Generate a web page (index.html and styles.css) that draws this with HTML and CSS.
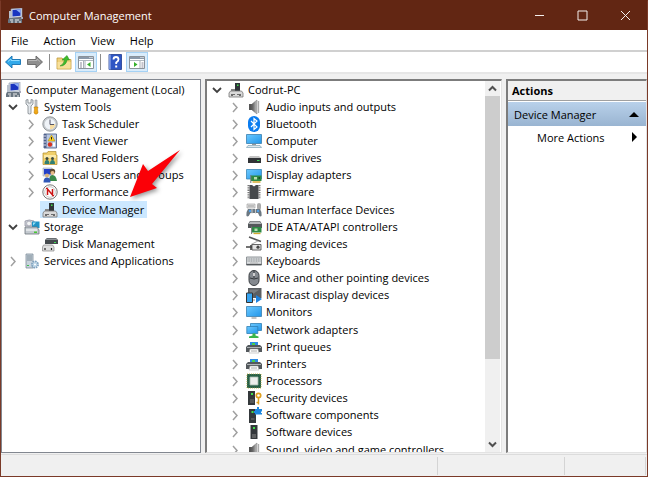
FILE: index.html
```html
<!DOCTYPE html>
<html lang="en">
<head>
    <meta charset="UTF-8">
    <meta name="viewport" content="width=device-width, initial-scale=1.0">
    <title>Computer Management</title>
    <link rel="stylesheet" href="styles.css">
</head>
<body>
    <!-- icon sprite -->
    <svg class="sprite" aria-hidden="true">
        <linearGradient id="screen" x1="0" y1="0" x2="1" y2="1">
            <stop offset="0" stop-color="#6cc9ff"/>
            <stop offset="1" stop-color="#2196ea"/>
        </linearGradient>
        <linearGradient id="metal" x1="0" y1="0" x2="1" y2="0">
            <stop offset="0" stop-color="#555"/>
            <stop offset="1" stop-color="#c8c8c8"/>
        </linearGradient>
        <symbol id="i-mgmt" viewBox="0 0 16 16">
            <path d="M3 1 14 0v9L3 10z" fill="#d4dce8" stroke="#8a94a8" stroke-width=".6"/>
            <path d="M4.500 2 12.500 1.300v6.500L4.500 8.500z" fill="#1a35c0"/>
            <path d="M8 1.700 12.500 1.300v4z" fill="#8fb0f5"/>
            <path d="M1 3h3v7H1z" fill="#b8c0cc"/>
            <path d="M13 9h2v2h-2z" fill="#aab"/>
            <path d="M1 10h12l1 2v3H0v-3z" fill="#687480"/>
            <path d="M2 11.500h3v1H2zM7 11.500h4v1H7zM3 13.500h2v1H3zM7 13.500h2v1H7zM11 13.500h2v1h-2z" fill="#eee"/>
        </symbol>
        <symbol id="i-tools" viewBox="0 0 16 16">
            <path d="M2 1v4l2 2v7.500q1.500 1 3 0V7l2-2V1L7 .500V4H4V.500z" fill="#e4e8ec" stroke="#7d858c" stroke-width=".8"/>
            <path d="M11 1h2v7h-2z" fill="#c8ccd0" stroke="#888" stroke-width=".5"/>
            <path d="M10 8h4l-.500 2 .500 4q-2 2.500-4 0l.500-4z" fill="#f0a818" stroke="#b87800" stroke-width=".5"/>
        </symbol>
        <symbol id="i-clock" viewBox="0 0 16 16">
            <circle cx="8" cy="8" r="7.200" fill="#c9cdd1" stroke="#7e8489" stroke-width=".8"/>
            <circle cx="8" cy="8" r="5.300" fill="#eff3f8"/>
            <path d="M8 8h5.300A5.300 5.300 0 0 1 8 13.300z" fill="#f7dca0"/>
            <path d="M8 3.500V8.500H12" fill="none" stroke="#556" stroke-width="1"/>
        </symbol>
        <symbol id="i-event" viewBox="0 0 16 16">
            <path d="M2 1h12.500v14H2z" fill="#b9c8e2" stroke="#55698e" stroke-width=".9"/>
            <path d="M2 1h2.500v14H2z" fill="#4e618a"/>
            <path d="M1 3h3M1 6h3M1 9h3M1 12h3" stroke="#dde" stroke-width="1"/>
            <path d="M9.500 2 13 8H6z" fill="#ffd426" stroke="#a98600" stroke-width=".5"/>
            <path d="M9.500 4v2.500" stroke="#222" stroke-width="1"/>
            <circle cx="8" cy="11.500" r="2.200" fill="#d7321e"/>
            <path d="M11 9.500h2v4h-2z" fill="#fff"/>
        </symbol>
        <symbol id="i-share" viewBox="0 0 16 16">
            <path d="M1 3h4l1-1.500h8V5h1v9.500H1z" fill="#f0cf6a" stroke="#b08d2e" stroke-width=".7"/>
            <path d="M2 5h12v3H2z" fill="#fbe9a8"/>
            <circle cx="5" cy="8.500" r="1.500" fill="#3c4a40"/>
            <circle cx="10.500" cy="8.500" r="1.500" fill="#3c4a40"/>
            <path d="M2.500 14q0-4 2.500-4t2.500 4zM8 14q0-4 2.500-4t2.500 4z" fill="#2f7f74"/>
        </symbol>
        <symbol id="i-users" viewBox="0 0 16 16">
            <path d="M1 1h9v8H1z" fill="#d5dbe6" stroke="#8a90a0" stroke-width=".5"/>
            <path d="M2 2h7v5.500H2z" fill="#2440c8"/>
            <circle cx="10.500" cy="4.500" r="2.700" fill="#5f4a30"/>
            <circle cx="10.500" cy="6" r="2" fill="#e8bb8a"/>
            <path d="M7 14q0-6 3.500-6t4.500 6z" fill="#3a8a4a"/>
            <circle cx="5" cy="8.500" r="2" fill="#d9b27c"/>
            <path d="M1.500 15.500q0-5 3.500-5t3.500 5z" fill="#3158b8"/>
        </symbol>
        <symbol id="i-perf" viewBox="0 0 16 16">
            <circle cx="8" cy="8" r="7.200" fill="#fff" stroke="#777" stroke-width="1"/>
            <circle cx="8" cy="8" r="5.300" fill="none" stroke="#bbb" stroke-width=".8"/>
            <path d="M5.500 11V5l5 6V5" fill="none" stroke="#cc1414" stroke-width="1.500"/>
            <path d="M4 4l8 8" stroke="#cc1414" stroke-width="1"/>
        </symbol>
        <symbol id="i-device" viewBox="0 0 16 16">
            <path d="M7 1h5v9H7z" fill="#30353a"/>
            <path d="M9 2.500h1.500V4H9z" fill="#3ee04a"/>
            <path d="M3 7h4v2H3z" fill="#888"/>
            <path d="M2.500 9h11L15 11v4H1v-4z" fill="#d9d9d9" stroke="#777" stroke-width=".8"/>
            <path d="M4 12v2M6 12v1M12 12v2M10 12v1" stroke="#222" stroke-width="1.200"/>
        </symbol>
        <symbol id="i-storage" viewBox="0 0 16 16">
            <path d="M1 2q4-2 9 0v5H1z" fill="#d2d6da" stroke="#889" stroke-width=".7"/>
            <path d="M8 2.500h7.500V9H8z" fill="#1f93c6"/>
            <path d="M9 3.500h3l-3 3z" fill="#9be0f5"/>
            <circle cx="5" cy="4.500" r="2.400" fill="#f2f4f5" stroke="#99a" stroke-width=".7"/>
            <path d="M1 8h12l2 3v4H1z" fill="#c4cad0" stroke="#6c747c" stroke-width=".8"/>
            <path d="M2 11h11" stroke="#fff" stroke-width="1"/>
            <path d="M10 12.500h3V14h-3z" fill="#48c832"/>
        </symbol>
        <symbol id="i-diskmgmt" viewBox="0 0 16 16">
            <path d="M3 4l2-2h9l2 2v4H3z" fill="#454a4e"/>
            <path d="M3.500 4 5 2.500h9L15.500 4z" fill="#8d9296"/>
            <path d="M12 6h2v1h-2z" fill="#45e05a"/>
            <path d="M1.500 9h9L12 11v4H.500v-4z" fill="#dedede" stroke="#888" stroke-width=".7"/>
            <path d="M3 12v2M9.500 12v2" stroke="#222" stroke-width="1.200"/>
        </symbol>
        <symbol id="i-services" viewBox="0 0 16 16">
            <path d="M2 1h7v14H2z" fill="#c8d3dc" stroke="#7f8d99" stroke-width=".8"/>
            <path d="M3 3h5M3 5h5M3 7h5" stroke="#73818d" stroke-width=".9"/>
            <path d="M3 12h2v1H3z" fill="#3bc04c"/>
            <circle cx="11" cy="11.500" r="3" fill="#eaf2f8" stroke="#7ea2bf" stroke-width="2" stroke-dasharray="1.600 .7"/>
            <circle cx="11" cy="11.500" r="2.300" fill="#b4cfe2"/>
            <circle cx="11" cy="11.500" r="1" fill="#fff"/>
        </symbol>
        <symbol id="i-audio" viewBox="0 0 16 16">
            <path d="M3 5h3v6H3z" fill="#555"/>
            <path d="M6 5 11 1v14L6 11z" fill="url(#metal)" stroke="#777" stroke-width=".5"/>
            <path d="M12.500 2v12" stroke="#aaa" stroke-width="1.300"/>
        </symbol>
        <symbol id="i-bluetooth" viewBox="0 0 16 16">
            <rect x="2" width="12" height="16" rx="6" fill="#0a7cf0"/>
            <path d="M5 5l6 6-3 2.500v-11L11 5l-6 6" fill="none" stroke="#fff" stroke-width="1.200"/>
        </symbol>
        <symbol id="i-computer" viewBox="0 0 16 16">
            <path d="M.500 1.500h15v9H.500z" fill="url(#screen)" stroke="#3a7fae" stroke-width=".8"/>
            <path d="M6 11h4v1H6z" fill="#999"/>
            <path d="M2 12.500h12l1.500 2H.500z" fill="#dfe7ec" stroke="#7fa5b8" stroke-width=".7"/>
        </symbol>
        <symbol id="i-disk" viewBox="0 0 16 16">
            <path d="M2 8l2-2h9l2 2z" fill="#c4c4c4"/>
            <path d="M2 8h13v5H2z" fill="#303336"/>
            <path d="M11 10h2.500v1H11z" fill="#3de05a"/>
        </symbol>
        <symbol id="i-display" viewBox="0 0 16 16">
            <path d="M.500 2.500h15v9.500H.500z" fill="url(#screen)" stroke="#3b86b5" stroke-width=".8"/>
            <path d="M5 8.500h10.500V14H5z" fill="#2d8a44"/>
            <path d="M8 10h3v2.500H8z" fill="#b8dcae"/>
            <path d="M12.500 10h1.500v2h-1.500z" fill="#1b5129"/>
            <path d="M6.500 15h8" stroke="#d5aa32" stroke-width="1.500"/>
            <path d="M4.800 8v8" stroke="#777"/>
        </symbol>
        <symbol id="i-firmware" viewBox="0 0 16 16">
            <path d="M2.500 1v14M13.500 1v14" stroke="#777" stroke-width="2" stroke-dasharray="1.300 1"/>
            <path d="M3.500 1H6l2 1.500L10 1h2.500v14h-9z" fill="#46494c"/>
        </symbol>
        <symbol id="i-hid" viewBox="0 0 16 16">
            <path d="M1 2h8v4H1z" fill="#e3e3e3" stroke="#999" stroke-width=".6"/>
            <path d="M2 4h6" stroke="#999" stroke-width="1"/>
            <rect x="11" y="1" width="4" height="7" rx="2" fill="#aaa"/>
            <path d="M2 7h12q2 3 1.500 7-2 1.500-3.500-3H4.500q-2 4.500-4 3Q0 10 2 7z" fill="#6c7882"/>
            <circle cx="4" cy="9" r="1.200" fill="#4ea0ea"/>
            <circle cx="12" cy="9" r="1.200" fill="#4ea0ea"/>
            <path d="M6 7v5M9.500 7v5" stroke="#ddd" stroke-width=".8"/>
        </symbol>
        <symbol id="i-ide" viewBox="0 0 16 16">
            <path d="M2 5l2-3h10l2 3v4H2z" fill="#54585b"/>
            <path d="M2.500 5 4.300 2.500h9.400L15.500 5z" fill="#b5b8ba"/>
            <path d="M6 8h9.500v5.500H6z" fill="#2d8a44"/>
            <path d="M8.500 9.500h3V12h-3z" fill="#b8dcae"/>
            <path d="M7.500 14.500h7" stroke="#d5aa32" stroke-width="1.300"/>
            <path d="M5.600 7.500V15" stroke="#777"/>
        </symbol>
        <symbol id="i-imaging" viewBox="0 0 16 16">
            <path d="M3 1 15 5.500" stroke="#555" stroke-width="1.500"/>
            <path d="M12 5 5 8.500" stroke="#aaa" stroke-width="1"/>
            <path d="M6 8.500h9V14H6z" fill="#e2e2e2" stroke="#555" stroke-width=".9"/>
            <circle cx="12" cy="11.200" r="1.600" fill="#444"/>
            <path d="M0 11h6M5 9v5" stroke="#444" stroke-width="1.600"/>
        </symbol>
        <symbol id="i-keyboard" viewBox="0 0 16 16">
            <path d="M.500 4h15v8H.500z" fill="#dcdfe1" stroke="#858a8e" stroke-width=".9"/>
            <path d="M1.500 6h13M1.500 8h13" stroke="#858a8e" stroke-width="1" stroke-dasharray="1.200 .5"/>
            <path d="M.500 11.500h15" stroke="#55595c" stroke-width="1.300"/>
            <path d="M4 10h8" stroke="#aaa" stroke-width=".8"/>
        </symbol>
        <symbol id="i-mouse" viewBox="0 0 16 16">
            <rect x="3" y=".5" width="10" height="15" rx="5" fill="#84898f" stroke="#383c40"/>
            <path d="M8 1v7M4 8q4 2 8 0" fill="none" stroke="#33373b"/>
            <path d="M8 3v3" stroke="#ddd" stroke-width="1.800"/>
        </symbol>
        <symbol id="i-miracast" viewBox="0 0 16 16">
            <path d="M2 1h13.500v10H2z" fill="#5b5f63"/>
            <path d="M3.500 2.500h10L4 9z" fill="#7a7e82"/>
            <path d="M.500 6h6v9.500h-6z" fill="#36a4f2" stroke="#333" stroke-width="1"/>
            <path d="M10 8l6 4-6 4z" fill="#1e83e0"/>
            <path d="M7 13h2" stroke="#888"/>
        </symbol>
        <symbol id="i-monitor" viewBox="0 0 16 16">
            <path d="M.500 2.500h15v10H.500z" fill="url(#screen)" stroke="#3a7fae" stroke-width=".8"/>
            <path d="M5.500 14h5" stroke="#999" stroke-width="1.200"/>
        </symbol>
        <symbol id="i-network" viewBox="0 0 16 16">
            <path d="M4.500 1.500h11v7h-11z" fill="url(#screen)" stroke="#2f7fb4" stroke-width=".8"/>
            <path d="M.800 4.500h11v7h-11z" fill="url(#screen)" stroke="#2f7fb4" stroke-width=".8"/>
            <path d="M6.500 11.500h3v2l3 1v1.500H3v-1.500l3.500-1z" fill="#3ab54a"/>
        </symbol>
        <symbol id="i-printer" viewBox="0 0 16 16">
            <path d="M4 3h8v4H4z" fill="#2b8ae4"/>
            <path d="M6 4h3v2H6z" fill="#49cf4d"/>
            <path d="M2 6h12l2 2v5H0V8z" fill="#53585c"/>
            <path d="M1 8h14v1H1z" fill="#aeb2b5"/>
            <path d="M4 10h8l1 4H3z" fill="#fff" stroke="#999" stroke-width=".5"/>
            <path d="M5 12h6" stroke="#aaa"/>
        </symbol>
        <symbol id="i-cpu" viewBox="0 0 16 16">
            <path d="M1 1h14v14H1z" fill="#276047" stroke="#c7b352" stroke-width="1" stroke-dasharray="1 1"/>
            <path d="M1.500 1.500h13v13h-13z" fill="#276047"/>
            <path d="M4 4h8v8H4z" fill="#eceeec" stroke="#a5b8ac" stroke-width=".8"/>
        </symbol>
        <symbol id="i-security" viewBox="0 0 16 16">
            <path d="M2 1h7v14H2z" fill="#34383b"/>
            <path d="M5 3h2v2H5z" fill="#3ee04a"/>
            <path d="M4 10h4M4 12h4" stroke="#777"/>
            <circle cx="12.500" cy="5.500" r="2.200" fill="none" stroke="#e0a020" stroke-width="1.700"/>
            <path d="M12.500 8v6.500M12.500 12.500h-2" stroke="#e0a020" stroke-width="1.500"/>
        </symbol>
        <symbol id="i-swcomp" viewBox="0 0 16 16">
            <path d="M3 2h7v14H3z" fill="#34383b"/>
            <path d="M5.500 4h2v2h-2z" fill="#3ee04a"/>
            <path d="M5 12h3.500" stroke="#777"/>
            <path d="M9 2h2V0h2v2h3v2.500h-1V6h1v1.500H9V6H8V4h1z" fill="#1e88e0"/>
        </symbol>
        <symbol id="i-swdev" viewBox="0 0 16 16">
            <path d="M4.500 1h7v14h-7z" fill="#34383b"/>
            <path d="M7 3h2v2H7z" fill="#3ee04a"/>
            <path d="M6 11h4M6 13h4" stroke="#888"/>
        </symbol>
        <symbol id="t-open" viewBox="0 0 14 14">
            <path d="M3 5l4 4 4-4" fill="none" stroke="#404040" stroke-width="1.800"/>
        </symbol>
        <symbol id="t-closed" viewBox="0 0 14 14">
            <path d="M5 3l4 4.500L5 12" fill="none" stroke="#a0a0a0" stroke-width="1.500"/>
        </symbol>
        <symbol id="i-panel" viewBox="0 0 16 16">
            <path d="M.500 2.500h15v12H.500z" fill="#fff" stroke="#8a929a"/>
            <path d="M1 3h14v2H1z" fill="#8a99aa"/>
            <path d="M1 6.500h14" stroke="#b0b8c0"/>
            <path d="M11.500 3.500h1M13.500 3.500h1" stroke="#fff"/>
        </symbol>
    </svg>

    <div class="window">
        <header class="titlebar">
            <svg class="icon"><use href="#i-mgmt"/></svg>
            <h1>Computer Management</h1>
            <div class="controls">
                <button aria-label="Minimize"><svg viewBox="0 0 11 11"><path d="M1 5.500h9"/></svg></button>
                <button aria-label="Maximize"><svg viewBox="0 0 11 11"><path d="M1 1h9v9H1z"/></svg></button>
                <button aria-label="Close"><svg viewBox="0 0 11 11"><path d="M1 1l9 9M10 1l-9 9"/></svg></button>
            </div>
        </header>

        <nav class="menubar">
            <button>File</button>
            <button>Action</button>
            <button>View</button>
            <button>Help</button>
        </nav>

        <div class="toolbar">
            <button aria-label="Back"><svg class="icon" viewBox="0 0 16 16"><path d="M.500 8 7 2v3.500h8.500v5H7V14z" fill="#32a9ea" stroke="#1470b0" stroke-width=".9"/><path d="M3 7.500 6 5v1.500h8.500" fill="none" stroke="#8edbff"/></svg></button>
            <button aria-label="Forward"><svg class="icon" viewBox="0 0 16 16"><path d="M15.500 8 9 2v3.500H.500v5H9V14z" fill="#8f8f8f" stroke="#666" stroke-width=".9"/><path d="M1.500 6.500H10V5l3 2.500" fill="none" stroke="#b8b8b8"/></svg></button>
            <span class="divider"></span>
            <button aria-label="Up one level"><svg class="icon" viewBox="0 0 16 16"><path d="M1 4h5l1.500 1.500H15V15H1z" fill="#f0d27c" stroke="#c09a3c" stroke-width=".8"/><path d="M1.500 8h13v6.500h-13z" fill="#f8e09a"/><path d="M4 12q4-2 4.500-6L6 6l5-4.500L13.500 6 11 6q-1 6-7 6z" fill="#3fbb2c" stroke="#238a18" stroke-width=".5"/></svg></button>
            <button class="on" aria-label="Show console tree"><svg class="icon" viewBox="0 0 16 16"><use href="#i-panel"/><path d="M5.500 7v7M7 7v7" stroke="#a8b0b8"/><path d="M2 9h2M2 11h2M2 13h2" stroke="#889"/><path d="M12.500 8v5L9 10.500z" fill="#35b02a"/></svg></button>
            <span class="divider"></span>
            <button aria-label="Help topics"><svg class="icon" viewBox="0 0 16 16"><path d="M2 .500h12.500v15H2z" fill="#2e56c4" stroke="#1c3a90" stroke-width=".8"/><path d="M2 .500h1.800v15H2z" fill="#7f9ae0"/><path d="M6.500 5.500Q6.500 3 9 3t2.500 2.500Q11.500 7 9.200 8.500V10" fill="none" stroke="#fff" stroke-width="1.800"/><path d="M8.200 11.500h2v2h-2z" fill="#fff"/></svg></button>
            <button class="on" aria-label="Show action pane"><svg class="icon" viewBox="0 0 16 16"><use href="#i-panel"/><path d="M11 7v7" stroke="#a8b0b8"/><path d="M12.500 9h2M12.500 11h2M12.500 13h2" stroke="#889"/><path d="M5 8v5l3.500-2.500z" fill="#35b02a"/></svg></button>
        </div>

        <main class="panes">
            <section class="pane console">
                <ul class="tree">
                    <li class="root"><a href="#" class="item"><svg class="icon"><use href="#i-mgmt"/></svg>Computer Management (Local)</a></li>
                    <li><button class="twisty" aria-label="Collapse"><svg><use href="#t-open"/></svg></button><a href="#" class="item"><svg class="icon"><use href="#i-tools"/></svg>System Tools</a></li>
                    <li class="sub"><button class="twisty" aria-label="Expand"><svg><use href="#t-closed"/></svg></button><a href="#" class="item"><svg class="icon"><use href="#i-clock"/></svg>Task Scheduler</a></li>
                    <li class="sub"><button class="twisty" aria-label="Expand"><svg><use href="#t-closed"/></svg></button><a href="#" class="item"><svg class="icon"><use href="#i-event"/></svg>Event Viewer</a></li>
                    <li class="sub"><button class="twisty" aria-label="Expand"><svg><use href="#t-closed"/></svg></button><a href="#" class="item"><svg class="icon"><use href="#i-share"/></svg>Shared Folders</a></li>
                    <li class="sub"><button class="twisty" aria-label="Expand"><svg><use href="#t-closed"/></svg></button><a href="#" class="item"><svg class="icon"><use href="#i-users"/></svg>Local Users and Groups</a></li>
                    <li class="sub"><button class="twisty" aria-label="Expand"><svg><use href="#t-closed"/></svg></button><a href="#" class="item"><svg class="icon"><use href="#i-perf"/></svg>Performance</a></li>
                    <li class="sub leaf"><a href="#" class="item selected"><svg class="icon"><use href="#i-device"/></svg>Device Manager</a></li>
                    <li><button class="twisty" aria-label="Collapse"><svg><use href="#t-open"/></svg></button><a href="#" class="item"><svg class="icon"><use href="#i-storage"/></svg>Storage</a></li>
                    <li class="sub leaf"><a href="#" class="item"><svg class="icon"><use href="#i-diskmgmt"/></svg>Disk Management</a></li>
                    <li><button class="twisty" aria-label="Expand"><svg><use href="#t-closed"/></svg></button><a href="#" class="item"><svg class="icon"><use href="#i-services"/></svg>Services and Applications</a></li>
                </ul>
                <svg class="pointer" viewBox="0 0 54 50"><path d="M1 48 14 15l5 7L51 1 23 35l5 4z"/></svg>
            </section>

            <section class="pane devices">
                <ul class="tree">
                    <li><button class="twisty" aria-label="Collapse"><svg><use href="#t-open"/></svg></button><a href="#" class="item"><svg class="icon"><use href="#i-device"/></svg>Codrut-PC</a></li>
                    <li class="sub"><button class="twisty" aria-label="Expand"><svg><use href="#t-closed"/></svg></button><a href="#" class="item"><svg class="icon"><use href="#i-audio"/></svg>Audio inputs and outputs</a></li>
                    <li class="sub"><button class="twisty" aria-label="Expand"><svg><use href="#t-closed"/></svg></button><a href="#" class="item"><svg class="icon"><use href="#i-bluetooth"/></svg>Bluetooth</a></li>
                    <li class="sub"><button class="twisty" aria-label="Expand"><svg><use href="#t-closed"/></svg></button><a href="#" class="item"><svg class="icon"><use href="#i-computer"/></svg>Computer</a></li>
                    <li class="sub"><button class="twisty" aria-label="Expand"><svg><use href="#t-closed"/></svg></button><a href="#" class="item"><svg class="icon"><use href="#i-disk"/></svg>Disk drives</a></li>
                    <li class="sub"><button class="twisty" aria-label="Expand"><svg><use href="#t-closed"/></svg></button><a href="#" class="item"><svg class="icon"><use href="#i-display"/></svg>Display adapters</a></li>
                    <li class="sub"><button class="twisty" aria-label="Expand"><svg><use href="#t-closed"/></svg></button><a href="#" class="item"><svg class="icon"><use href="#i-firmware"/></svg>Firmware</a></li>
                    <li class="sub"><button class="twisty" aria-label="Expand"><svg><use href="#t-closed"/></svg></button><a href="#" class="item"><svg class="icon"><use href="#i-hid"/></svg>Human Interface Devices</a></li>
                    <li class="sub"><button class="twisty" aria-label="Expand"><svg><use href="#t-closed"/></svg></button><a href="#" class="item"><svg class="icon"><use href="#i-ide"/></svg>IDE ATA/ATAPI controllers</a></li>
                    <li class="sub"><button class="twisty" aria-label="Expand"><svg><use href="#t-closed"/></svg></button><a href="#" class="item"><svg class="icon"><use href="#i-imaging"/></svg>Imaging devices</a></li>
                    <li class="sub"><button class="twisty" aria-label="Expand"><svg><use href="#t-closed"/></svg></button><a href="#" class="item"><svg class="icon"><use href="#i-keyboard"/></svg>Keyboards</a></li>
                    <li class="sub"><button class="twisty" aria-label="Expand"><svg><use href="#t-closed"/></svg></button><a href="#" class="item"><svg class="icon"><use href="#i-mouse"/></svg>Mice and other pointing devices</a></li>
                    <li class="sub"><button class="twisty" aria-label="Expand"><svg><use href="#t-closed"/></svg></button><a href="#" class="item"><svg class="icon"><use href="#i-miracast"/></svg>Miracast display devices</a></li>
                    <li class="sub"><button class="twisty" aria-label="Expand"><svg><use href="#t-closed"/></svg></button><a href="#" class="item"><svg class="icon"><use href="#i-monitor"/></svg>Monitors</a></li>
                    <li class="sub"><button class="twisty" aria-label="Expand"><svg><use href="#t-closed"/></svg></button><a href="#" class="item"><svg class="icon"><use href="#i-network"/></svg>Network adapters</a></li>
                    <li class="sub"><button class="twisty" aria-label="Expand"><svg><use href="#t-closed"/></svg></button><a href="#" class="item"><svg class="icon"><use href="#i-printer"/></svg>Print queues</a></li>
                    <li class="sub"><button class="twisty" aria-label="Expand"><svg><use href="#t-closed"/></svg></button><a href="#" class="item"><svg class="icon"><use href="#i-printer"/></svg>Printers</a></li>
                    <li class="sub"><button class="twisty" aria-label="Expand"><svg><use href="#t-closed"/></svg></button><a href="#" class="item"><svg class="icon"><use href="#i-cpu"/></svg>Processors</a></li>
                    <li class="sub"><button class="twisty" aria-label="Expand"><svg><use href="#t-closed"/></svg></button><a href="#" class="item"><svg class="icon"><use href="#i-security"/></svg>Security devices</a></li>
                    <li class="sub"><button class="twisty" aria-label="Expand"><svg><use href="#t-closed"/></svg></button><a href="#" class="item"><svg class="icon"><use href="#i-swcomp"/></svg>Software components</a></li>
                    <li class="sub"><button class="twisty" aria-label="Expand"><svg><use href="#t-closed"/></svg></button><a href="#" class="item"><svg class="icon"><use href="#i-swdev"/></svg>Software devices</a></li>
                    <li class="sub"><button class="twisty" aria-label="Expand"><svg><use href="#t-closed"/></svg></button><a href="#" class="item"><svg class="icon"><use href="#i-audio"/></svg>Sound, video and game controllers</a></li>
                </ul>
                <div class="scrollbar">
                    <button aria-label="Scroll up"><svg viewBox="0 0 9 9"><path d="M1 6.500 4.500 3 8 6.500"/></svg></button>
                    <div class="track"><div class="thumb"></div></div>
                    <button aria-label="Scroll down"><svg viewBox="0 0 9 9"><path d="M1 2.500 4.500 6 8 2.500"/></svg></button>
                </div>
            </section>

            <aside class="pane actions">
                <h2>Actions</h2>
                <button class="group">Device Manager<svg viewBox="0 0 10 10"><path d="M0 8 5 3l5 5z"/></svg></button>
                <button class="action">More Actions<svg viewBox="0 0 10 10"><path d="M3 0l5 5-5 5z"/></svg></button>
            </aside>
        </main>

        <footer class="statusbar">
            <span></span>
            <span></span>
            <span></span>
            <span></span>
        </footer>
    </div>
</body>
</html>
```
FILE: styles.css
```css
* {
    box-sizing: border-box;
}
body {
    margin: 0;
    font-family: "Open Sans", "Noto Sans", sans-serif;
    font-size: 11px;
    color: #000;
}
button {
    display: flex;
    align-items: center;
    justify-content: center;
    padding: 0;
    border: none;
    background: none;
    font: inherit;
    color: inherit;
}
.sprite {
    position: absolute;
    width: 0;
    height: 0;
}
.icon {
    width: 16px;
    height: 16px;
    flex: none;
}
.window {
    display: flex;
    flex-direction: column;
    height: 100vh;
    border: 1px solid #7a3a28;
    border-top-color: #622613;
    background: #f0f0f0;
}

/* title bar */
.titlebar {
    display: flex;
    align-items: center;
    gap: 5px;
    height: 29px;
    flex: none;
    padding-left: 7px;
    background: #622613;
    color: #fff;
}
.titlebar h1 {
    margin: 0;
    font-size: 11px;
    font-weight: 400;
}
.controls {
    display: flex;
    height: 100%;
    margin-left: auto;
}
.controls button {
    width: 43px;
}
.controls svg {
    width: 11px;
    height: 11px;
    fill: none;
    stroke: #f4eeec;
}

/* menu and toolbar */
.menubar {
    display: flex;
    gap: 15px;
    height: 20px;
    flex: none;
    padding-left: 10px;
    background: #fff;
}
.toolbar {
    display: flex;
    align-items: center;
    height: 24px;
    flex: none;
    padding-left: 1px;
    background: #fff;
    border-top: 2px solid #d0d0d0;
    border-bottom: 2px solid #e6e6e6;
}
.toolbar button {
    width: 22px;
    height: 20px;
}
.toolbar .on {
    background: #d9ecfb;
    border: 1px solid #a5d2f5;
}
.divider {
    width: 1px;
    height: 16px;
    margin: 0 3px;
    background: #8c8c8c;
}

/* panes */
.panes {
    display: grid;
    grid-template-columns: 200px 1fr 141px;
    grid-template-rows: minmax(0, 1fr);
    gap: 4px;
    flex: 1;
    min-height: 0;
    padding: 5px 0 1px;
}
.pane {
    position: relative;
    background: #fff;
    overflow: hidden;
}
.console {
    border: 1px solid #828790;
    padding-top: 1px;
}
.devices,
.actions {
    border: 2px solid #7c7c7c;
    border-right: 1px solid #e3e3e3;
    border-bottom: 1px solid #e3e3e3;
}
.devices {
    display: flex;
}
.devices .tree {
    flex: 1;
    padding-left: 3px;
}

/* tree view */
.tree {
    margin: 0;
    padding: 0 0 0 4px;
    list-style: none;
    white-space: nowrap;
}
.tree li {
    display: flex;
    align-items: center;
    height: 17px;
}
.tree li:nth-child(7n) {
    margin-bottom: 1px;
}
.tree .root {
    margin-left: -2px;
}
.tree .sub {
    padding-left: 18px;
}
.tree .leaf {
    padding-left: 34px;
}
.twisty {
    width: 14px;
    height: 14px;
    margin-right: 2px;
}
.twisty svg {
    width: 14px;
    height: 14px;
}
.item {
    display: flex;
    align-items: center;
    gap: 4px;
    height: 17px;
    padding: 0 3px 0 2px;
    color: inherit;
    text-decoration: none;
}
.item.selected {
    background: #cce8ff;
}

/* red arrow over the console tree */
.pointer {
    position: absolute;
    left: 127px;
    top: 69px;
    width: 54px;
    height: 50px;
    overflow: visible;
    fill: #fb0007;
    filter: drop-shadow(2px 2px 2px rgba(0, 0, 0, 0.4));
}

/* scrollbar */
.scrollbar {
    display: flex;
    flex-direction: column;
    width: 15px;
    margin-right: 1px;
    background: #f0f0f0;
}
.scrollbar button {
    height: 15px;
}
.scrollbar svg {
    width: 9px;
    height: 9px;
    fill: none;
    stroke: #505050;
    stroke-width: 2;
}
.track {
    flex: 1;
}
.thumb {
    height: 77%;
    background: #cdcdcd;
}

/* actions pane */
.actions h2 {
    margin: 0 0 1px;
    padding-left: 4px;
    background: #f0f0f0;
    border-bottom: 1px solid #a0a0a0;
    font-size: 11px;
    line-height: 19px;
}
.actions button {
    justify-content: space-between;
    width: 100%;
    height: 24px;
    padding: 0 7px 0 6px;
}
.actions .group {
    background: linear-gradient(#b9d1ea, #99b4d1);
}
.actions .action {
    height: 22px;
    padding-left: 29px;
}
.actions svg {
    width: 10px;
    height: 10px;
}

/* status bar */
.statusbar {
    display: grid;
    grid-template-columns: 1fr 127px 81px 2px;
    height: 22px;
    flex: none;
    padding: 2px 0 1px;
    border-top: 1px solid #dcdcdc;
}
.statusbar span + span {
    border-left: 1px solid #d4d4d4;
}
```
